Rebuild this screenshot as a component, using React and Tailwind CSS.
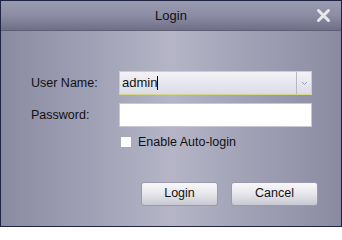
export default function App() {
  return (
    <div className="w-[342px] h-[227px] border border-[#1e2442] flex flex-col overflow-hidden" style={{ fontFamily: '"Liberation Sans", Arial, sans-serif' }}>
      {/* title bar */}
      <div className="h-[30px] shrink-0 relative flex items-center justify-center bg-gradient-to-b from-[#9a9ab0] via-[#8c8ca4] to-[#6f6f88] border-b border-[#5e5e74]">
        <span className="text-[13px] text-[#111]">Login</span>
        <svg className="absolute right-[10px] top-[7px]" width="15" height="15" viewBox="0 0 15 15">
          <path d="M2.5 2.5 L12.5 12.5 M12.5 2.5 L2.5 12.5" stroke="#e8e8e8" strokeWidth="3" strokeLinecap="round" />
        </svg>
      </div>

      {/* body */}
      <div className="flex-1 bg-gradient-to-r from-[#8a8aa2] via-[#b5b5c7] to-[#8a8aa2] text-[12.5px] text-[#111] pt-[40px] pl-[30px] pr-[29px]">
        <div className="flex items-center h-[24px]">
          <span className="w-[88px]">User Name:</span>
          <div className="flex-1 h-[24px] border border-[#d6d68a] bg-gradient-to-b from-[#f2f2f6] to-[#dcdce8] flex items-center">
            <span className="flex-1 pl-[2px] text-[13px]">admin<span className="inline-block w-px h-[14px] bg-black align-middle -mt-[2px]"></span></span>
            <div className="w-[15px] h-full border-l border-[#b8b8c4] flex items-center justify-center">
              <svg width="7" height="5" viewBox="0 0 7 5">
                <path d="M1 1 L3.5 3.5 L6 1" stroke="#9a9aa6" strokeWidth="1" fill="none" />
              </svg>
            </div>
          </div>
        </div>

        <div className="flex items-center h-[24px] mt-[8px]">
          <span className="w-[88px]">Password:</span>
          <div className="flex-1 h-[24px] bg-white border border-[#c8c8d4]"></div>
        </div>

        <div className="flex items-center mt-[6px] ml-[89px]">
          <div className="w-[12px] h-[12px] bg-white border border-[#a8a8b8]"></div>
          <span className="ml-[6px]">Enable Auto-login</span>
        </div>

        <div className="flex justify-end gap-[13px] mt-[30px] mr-[-6px]">
          <button className="w-[77px] h-[24px] rounded-[3px] border border-[#9a9aac] bg-gradient-to-b from-[#f8f8fa] via-[#e6e6ec] to-[#c8c8d2] text-[12.5px] text-[#111]">Login</button>
          <button className="w-[87px] h-[24px] rounded-[3px] border border-[#9a9aac] bg-gradient-to-b from-[#f8f8fa] via-[#e6e6ec] to-[#c8c8d2] text-[12.5px] text-[#111]">Cancel</button>
        </div>
      </div>
    </div>
  )
}
